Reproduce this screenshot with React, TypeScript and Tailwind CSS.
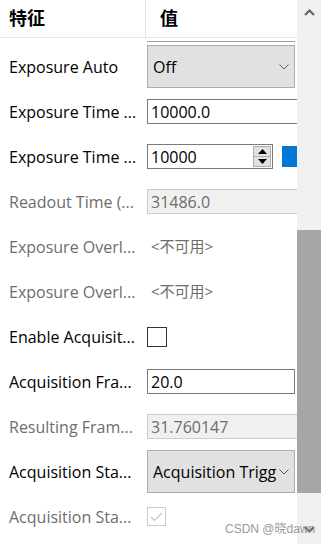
const font = { fontFamily: '"Open Sans", "Noto Sans", "Noto Sans CJK SC", sans-serif' };

function Chevron() {
  return (
    <svg width="10" height="6" viewBox="0 0 10 6" className="shrink-0">
      <path d="M0.5 0.5 L5 5 L9.5 0.5" fill="none" stroke="#606060" strokeWidth="1" />
    </svg>
  );
}

function Combo({ value }: { value: string }) {
  return (
    <div className="relative flex h-[43px] w-[148px] items-center overflow-hidden border border-[#adadad] bg-[#e1e1e1] pl-[5px]">
      <span className="whitespace-nowrap text-[16px] text-black">{value}</span>
      <div className="absolute right-[5px] top-1/2 -translate-y-1/2">
        <Chevron />
      </div>
    </div>
  );
}

function TextBox({ value, disabled, cut }: { value: string; disabled?: boolean; cut?: boolean }) {
  return (
    <div
      className={
        (cut ? "w-[160px] " : "w-[148px] ") +
        (disabled
          ? "border-[#cccccc] bg-[#f0f0f0] text-[#6d6d6d] "
          : "border-[#7a7a7a] bg-white text-black ") +
        "flex h-[25px] items-center border pl-[3px] text-[16px]"
      }
    >
      {value}
    </div>
  );
}

function SpinBox() {
  return (
    <div className="flex items-center">
      <div className="flex h-[25px] w-[126px] items-center justify-between border border-[#7a7a7a] bg-white pl-[3px] pr-[1px] text-[16px] text-black">
        <span>10000</span>
        <div className="flex h-[21px] w-[18px] flex-col border border-[#adadad] bg-[#e1e1e1]">
          <div className="flex flex-1 items-center justify-center border-b border-[#adadad]">
            <svg width="9" height="5" viewBox="0 0 9 5">
              <path d="M0 5 L4.5 0 L9 5 Z" fill="#000" />
            </svg>
          </div>
          <div className="flex flex-1 items-center justify-center">
            <svg width="9" height="5" viewBox="0 0 9 5">
              <path d="M0 0 L4.5 5 L9 0 Z" fill="#000" />
            </svg>
          </div>
        </div>
      </div>
      <div className="ml-[9px] h-[21px] w-[20px] bg-[#0078d7]" />
    </div>
  );
}

function CheckBox({ checked, disabled }: { checked?: boolean; disabled?: boolean }) {
  return (
    <div
      className={
        (disabled ? "h-[19px] w-[19px] border-[#cccccc] " : "h-[20px] w-[20px] border-[#333333] ") +
        "flex items-center justify-center border bg-white"
      }
    >
      {checked && (
        <svg width="13" height="10" viewBox="0 0 13 10">
          <path d="M1 5 L4.5 8.5 L12 1" fill="none" stroke="#c4c4c4" strokeWidth="1.2" />
        </svg>
      )}
    </div>
  );
}

type Row = { label: string; disabled?: boolean; value: React.ReactNode };

const rows: Row[] = [
  { label: "Exposure Auto", value: <Combo value="Off" /> },
  { label: "Exposure Time ...", value: <TextBox value="10000.0" cut /> },
  { label: "Exposure Time ...", value: <SpinBox /> },
  { label: "Readout Time (...", disabled: true, value: <TextBox value="31486.0" disabled cut /> },
  { label: "Exposure Overl...", disabled: true, value: <span className="pl-[4px] text-[15px] text-[#6d6d6d]">&lt;不可用&gt;</span> },
  { label: "Exposure Overl...", disabled: true, value: <span className="pl-[4px] text-[15px] text-[#6d6d6d]">&lt;不可用&gt;</span> },
  { label: "Enable Acquisit...", value: <CheckBox /> },
  { label: "Acquisition Fra...", value: <TextBox value="20.0" /> },
  { label: "Resulting Fram...", disabled: true, value: <TextBox value="31.760147" disabled cut /> },
  { label: "Acquisition Sta...", value: <Combo value="Acquisition Trigg" /> },
  { label: "Acquisition Sta...", disabled: true, value: <CheckBox checked disabled /> },
];

export default function App() {
  return (
    <div className="relative flex h-[544px] w-[331px] overflow-hidden bg-white" style={font}>
      <div className="w-[297px] shrink-0 overflow-hidden">
        <div className="grid h-[38px] grid-cols-[146px_1fr] border-b border-[#e5e5e5]">
          <div className="flex items-center border-r border-[#e5e5e5] pl-[9px] text-[18px] font-bold text-black">特征</div>
          <div className="flex items-center pl-[14px] text-[18px] font-bold text-black">值</div>
        </div>
        <div className="grid h-[6px] grid-cols-[147px_1fr]">
          <div />
          <div className="mt-[3px] h-[1px] w-[148px] bg-[#a0a0a0]" />
        </div>
        {rows.map((r, i) => (
          <div key={i} className="grid h-[45px] grid-cols-[147px_1fr] items-center">
            <div
              className={
                (r.disabled ? "text-[#6d6d6d] " : "text-black ") +
                "whitespace-nowrap pl-[9px] text-[16px]"
              }
            >
              {r.label}
            </div>
            <div className="flex items-center">{r.value}</div>
          </div>
        ))}
      </div>
      <div className="flex w-[24px] shrink-0 flex-col bg-[#f0f0f0]">
        <div className="flex h-[24px] items-center justify-center">
          <svg width="11" height="7" viewBox="0 0 11 7">
            <path d="M1 6 L5.5 1.5 L10 6" fill="none" stroke="#606060" strokeWidth="2" />
          </svg>
        </div>
        <div className="h-[206px]" />
        <div className="h-[263px] bg-[#a6a6a6]" />
        <div className="flex flex-1 items-start justify-center pt-[33px]">
          <svg width="11" height="7" viewBox="0 0 11 7">
            <path d="M1 1 L5.5 5.5 L10 1" fill="none" stroke="#606060" strokeWidth="2" />
          </svg>
        </div>
      </div>
      <div className="absolute left-[225px] top-[520px] whitespace-nowrap text-[12px] text-[#9a9a9a]" style={{ fontFamily: '"Liberation Sans", "Noto Sans CJK SC", sans-serif' }}>
        CSDN @晓dawn
      </div>
    </div>
  );
}
